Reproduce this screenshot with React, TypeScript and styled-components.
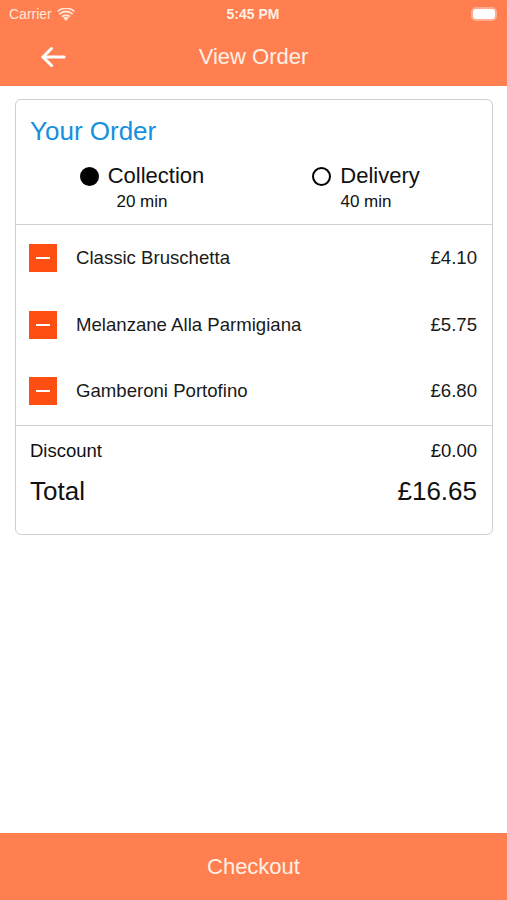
import styled, { createGlobalStyle } from 'styled-components';

const GlobalStyle = createGlobalStyle`
  html, body {
    margin: 0;
    padding: 0;
    background: #ffffff;
    font-family: "Liberation Sans", Arial, sans-serif;
  }
`;

const Screen = styled.div`
  width: 507px;
  height: 900px;
  display: flex;
  flex-direction: column;
  background: #ffffff;
`;

const Header = styled.header`
  background-color: #ff7f50;
  color: #fff3ea;
  display: flex;
  flex-direction: column;
`;

const StatusBar = styled.div`
  height: 28px;
  display: grid;
  grid-template-columns: 1fr auto 1fr;
  align-items: center;
  padding: 0 10px 0 9px;
  font-size: 14px;
`;

const Carrier = styled.div`
  display: flex;
  align-items: center;
  gap: 5px;
  color: #ffe7d9;
`;

const Clock = styled.div`
  font-weight: bold;
  font-size: 14px;
  color: #fff0e6;
`;

const Battery = styled.div`
  justify-self: end;
  width: 22px;
  height: 10px;
  background: #ffffff;
  border-radius: 3px;
  box-shadow: 0 0 0 2px rgba(255, 255, 255, 0.35);
  margin-right: 2px;
`;

const NavBar = styled.div`
  height: 58px;
  display: grid;
  grid-template-columns: 80px 1fr 80px;
  align-items: center;
`;

const BackButton = styled.button`
  background: transparent;
  border: none;
  padding: 0 0 0 40px;
  display: flex;
  align-items: center;
  color: #ffffff;
`;

const Title = styled.h1`
  margin: 0;
  text-align: center;
  font-weight: normal;
  font-size: 22px;
  color: #fff0e6;
`;

const Content = styled.main`
  flex: 1;
  padding: 13px 14px 0 15px;
`;

const Card = styled.section`
  border: 1px solid #cfcfcf;
  border-radius: 6px;
  background: #ffffff;
  padding-bottom: 27px;
`;

const CardTop = styled.div`
  padding: 16px 14px 12px;
  border-bottom: 1px solid #cfcfcf;
`;

const Heading = styled.h2`
  margin: 0 0 16px;
  font-weight: normal;
  font-size: 26px;
  color: #1590dc;
`;

const Options = styled.div`
  display: grid;
  grid-template-columns: 1fr 1fr;
`;

const Option = styled.div`
  display: flex;
  flex-direction: column;
  align-items: center;
`;

const OptionLabel = styled.div`
  display: flex;
  align-items: center;
  gap: 9px;
  font-size: 22px;
  color: #111111;
`;

const Radio = styled.span<{ $checked?: boolean }>`
  width: 19px;
  height: 19px;
  box-sizing: border-box;
  border-radius: 50%;
  border: 2px solid #000000;
  background: ${(p) => (p.$checked ? '#000000' : 'transparent')};
`;

const OptionTime = styled.div`
  font-size: 17px;
  color: #111111;
  margin-top: 3px;
`;

const Items = styled.ul`
  list-style: none;
  margin: 0;
  padding: 19px 0 20px;
  border-bottom: 1px solid #cfcfcf;
  display: flex;
  flex-direction: column;
  gap: 38.5px;
`;

const ItemRow = styled.li`
  display: flex;
  align-items: center;
  padding: 0 15px 0 13px;
  height: 28px;
`;

const RemoveButton = styled.button`
  width: 28px;
  height: 28px;
  border: none;
  padding: 0;
  background: #ff4e12;
  display: flex;
  align-items: center;
  justify-content: center;
  margin-right: 19px;

  &::after {
    content: '';
    width: 14px;
    height: 2px;
    background: #ffffff;
  }
`;

const ItemName = styled.span`
  flex: 1;
  font-size: 18.6px;
  color: #1a1a1a;
`;

const Price = styled.span`
  font-size: 18.6px;
  color: #1a1a1a;
`;

const Summary = styled.div`
  padding: 14px 15px 0 14px;
  display: flex;
  flex-direction: column;
  gap: 14px;
`;

const SummaryRow = styled.div<{ $size: number }>`
  display: flex;
  justify-content: space-between;
  align-items: center;
  font-size: ${(p) => p.$size}px;
  color: #111111;
`;

const CheckoutBar = styled.button`
  height: 67px;
  border: none;
  background: #ff7f50;
  color: #fff0e6;
  font-family: inherit;
  font-size: 22px;
  width: 100%;
`;

const items = [
  { name: 'Classic Bruschetta', price: '£4.10' },
  { name: 'Melanzane Alla Parmigiana', price: '£5.75' },
  { name: 'Gamberoni Portofino', price: '£6.80' },
];

const Wifi = () => (
  <svg width="18" height="13" viewBox="0 0 18 13" fill="#ffe7d9">
    <path d="M9 13 L6.3 10.1 A4 4 0 0 1 11.7 10.1 Z" />
    <path d="M4.4 8.1 A6.6 6.6 0 0 1 13.6 8.1 L12.3 9.5 A4.8 4.8 0 0 0 5.7 9.5 Z" />
    <path d="M1.8 5.4 A10.3 10.3 0 0 1 16.2 5.4 L14.9 6.8 A8.4 8.4 0 0 0 3.1 6.8 Z" />
    <path d="M0 2.9 A13 13 0 0 1 18 2.9 L16.9 4.1 A11.4 11.4 0 0 0 1.1 4.1 Z" />
  </svg>
);

const BackArrow = () => (
  <svg width="26" height="22" viewBox="0 0 26 22" fill="none" stroke="#ffffff" strokeWidth="3" strokeLinecap="round" strokeLinejoin="round">
    <path d="M24 11 H3" />
    <path d="M11.5 2.5 L3 11 L11.5 19.5" />
  </svg>
);

export default function App() {
  return (
    <Screen>
      <GlobalStyle />
      <Header>
        <StatusBar>
          <Carrier>
            Carrier <Wifi />
          </Carrier>
          <Clock>5:45 PM</Clock>
          <Battery />
        </StatusBar>
        <NavBar>
          <BackButton aria-label="Back">
            <BackArrow />
          </BackButton>
          <Title>View Order</Title>
          <div />
        </NavBar>
      </Header>

      <Content>
        <Card>
          <CardTop>
            <Heading>Your Order</Heading>
            <Options>
              <Option>
                <OptionLabel>
                  <Radio $checked />
                  Collection
                </OptionLabel>
                <OptionTime>20 min</OptionTime>
              </Option>
              <Option>
                <OptionLabel>
                  <Radio />
                  Delivery
                </OptionLabel>
                <OptionTime>40 min</OptionTime>
              </Option>
            </Options>
          </CardTop>

          <Items>
            {items.map((item) => (
              <ItemRow key={item.name}>
                <RemoveButton aria-label={`Remove ${item.name}`} />
                <ItemName>{item.name}</ItemName>
                <Price>{item.price}</Price>
              </ItemRow>
            ))}
          </Items>

          <Summary>
            <SummaryRow $size={18.5}>
              <span>Discount</span>
              <span>£0.00</span>
            </SummaryRow>
            <SummaryRow $size={26}>
              <span>Total</span>
              <span>£16.65</span>
            </SummaryRow>
          </Summary>
        </Card>
      </Content>

      <CheckoutBar>Checkout</CheckoutBar>
    </Screen>
  );
}
